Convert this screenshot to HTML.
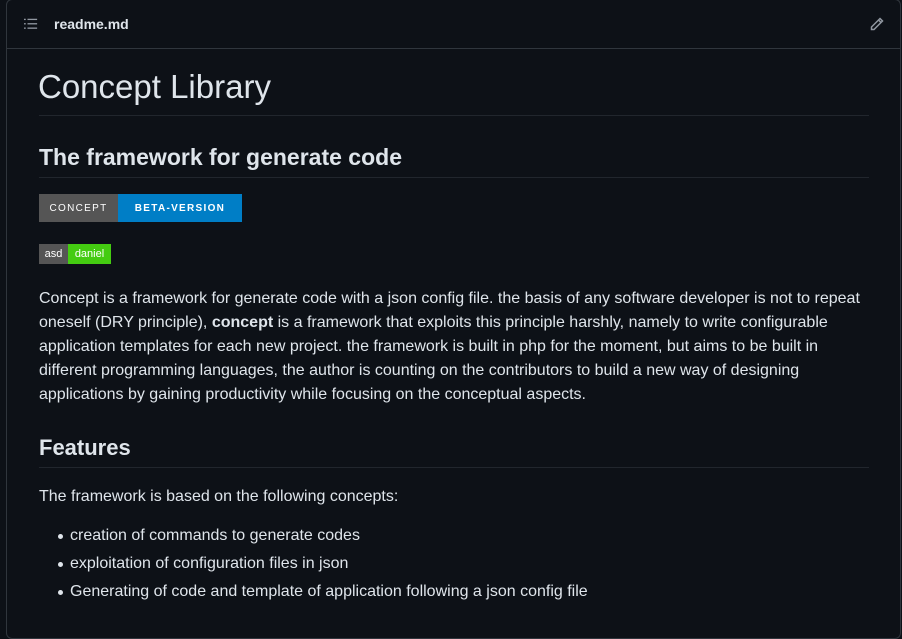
<!DOCTYPE html>
<html><head><meta charset="utf-8"><style>
*{margin:0;padding:0;box-sizing:border-box}
body{width:902px;height:630px;background:#0d1117;font-family:"Liberation Sans",sans-serif;color:#dfe5eb;overflow:hidden;position:relative}
.box{position:absolute;left:6px;top:-1px;width:895px;height:640px;border:1px solid #30363d;border-radius:6px}
.hdr{position:absolute;left:6px;top:0;width:895px;height:49px;border-bottom:1px solid #30363d}
.a{position:absolute;white-space:nowrap}
.rule{position:absolute;left:39px;width:830px;height:1px;background:#21262d}
p.l{position:absolute;left:39px;font-size:16px;line-height:24px;white-space:nowrap}
li{position:absolute;left:70px;font-size:16px;list-style:none;white-space:nowrap}
li:before{content:"";position:absolute;left:-12px;top:7px;width:5px;height:5px;border-radius:50%;background:#dfe5eb}
</style></head><body>
<div class="box"></div>
<div class="hdr"></div>
<svg class="a" style="left:24px;top:17px" width="14" height="14" viewBox="0 0 16 16" fill="#9198a1"><rect x="0" y="2" width="2" height="1.5"/><rect x="0" y="7" width="2" height="1.5"/><rect x="0" y="12" width="2" height="1.5"/><rect x="4" y="2" width="11" height="1.5"/><rect x="4" y="7" width="11" height="1.5"/><rect x="4" y="12" width="11" height="1.5"/></svg>
<div class="a" style="left:54px;top:16px;font-size:14px;font-weight:bold">readme.md</div>
<svg class="a" style="left:869px;top:16px" width="16" height="16" viewBox="0 0 16 16" fill="none" stroke="#9198a1" stroke-width="1.5"><path d="M11 2.5l2.5 2.5L5 13.5H2.5V11z"/><path d="M9.5 4l2.5 2.5"/></svg>
<div class="a" style="left:38px;top:68px;font-size:33px">Concept Library</div>
<div class="rule" style="top:115px"></div>
<div class="a" style="left:39px;top:144px;font-size:23px;font-weight:bold">The framework for generate code</div>
<div class="rule" style="top:177px"></div>
<div class="a" style="left:39px;top:194px;width:79px;height:28px;background:#555;color:#fff;font-size:10px;letter-spacing:1.3px;text-align:center;line-height:29px">CONCEPT</div>
<div class="a" style="left:118px;top:194px;width:124px;height:28px;background:#007ec6;color:#fff;font-size:10px;font-weight:bold;letter-spacing:1.3px;text-align:center;line-height:29px">BETA-VERSION</div>
<div class="a" style="left:39px;top:244px;width:29px;height:20px;background:#555;color:#fff;font-size:11px;text-align:center;line-height:21px">asd</div>
<div class="a" style="left:68px;top:244px;width:43px;height:20px;background:#4c1;color:#fff;font-size:11px;text-align:center;line-height:21px">daniel</div>
<p class="l" style="top:287px">Concept is a framework for generate code with a json config file. the basis of any software developer is not to repeat<br>oneself (DRY principle), <b>concept</b> is a framework that exploits this principle harshly, namely to write configurable<br>application templates for each new project. the framework is built in php for the moment, but aims to be built in<br>different programming languages, the author is counting on the contributors to build a new way of designing<br>applications by gaining productivity while focusing on the conceptual aspects.</p>
<div class="a" style="left:39px;top:435px;font-size:22px;font-weight:bold">Features</div>
<div class="rule" style="top:467px"></div>
<p class="l" style="top:485px">The framework is based on the following concepts:</p>
<ul><li style="top:527px">creation of commands to generate codes</li>
<li style="top:555px">exploitation of configuration files in json</li>
<li style="top:583px">Generating of code and template of application following a json config file</li></ul>
</body></html>
